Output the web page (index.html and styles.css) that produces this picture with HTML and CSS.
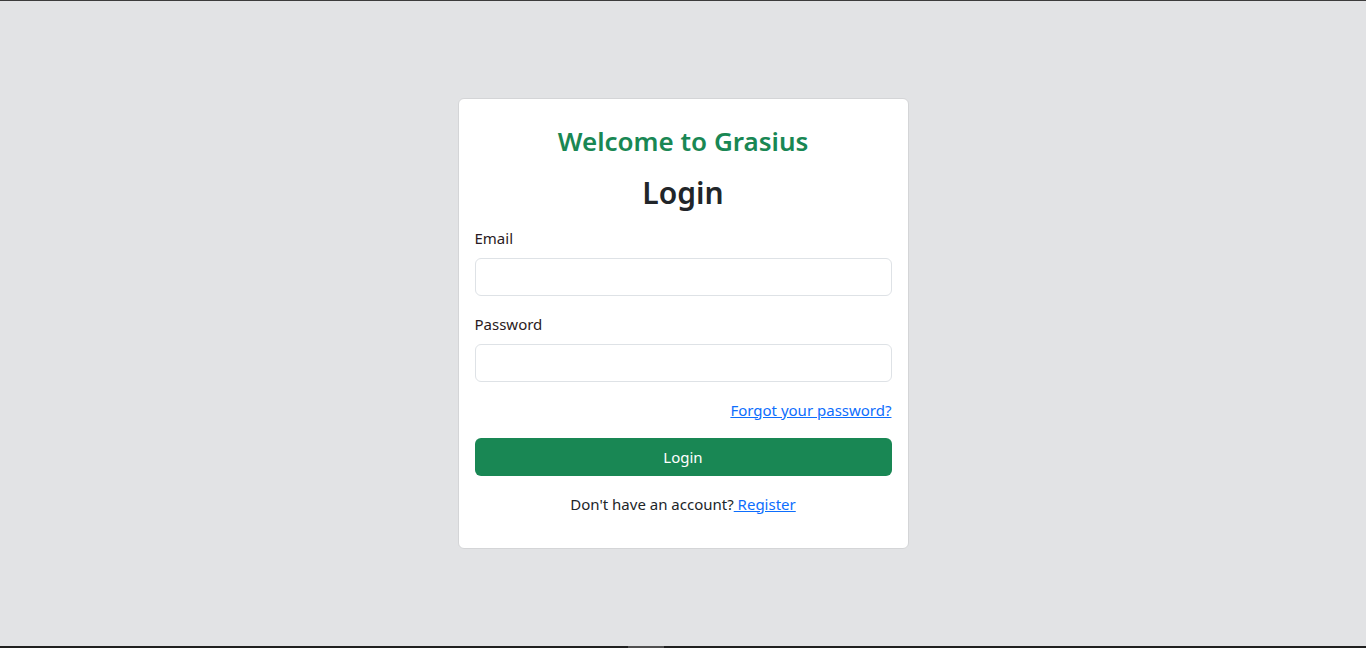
FILE: index.html
```html
<!DOCTYPE html>
<html lang="en">
<head>
<meta charset="utf-8">
<title>Login - Grasius</title>
<link rel="stylesheet" href="styles.css">
</head>
<body>
<div class="frame">
  <div class="top-edge"></div>
  <main class="page">
    <div class="card">
      <h3 class="welcome">Welcome to Grasius</h3>
      <h2 class="title">Login</h2>
      <form class="form">
        <div class="field">
          <label class="label" for="email">Email</label>
          <input class="input" id="email" type="email">
        </div>
        <div class="field">
          <label class="label" for="password">Password</label>
          <input class="input" id="password" type="password">
        </div>
        <div class="forgot-row"><a class="link" href="#">Forgot your password?</a></div>
        <button class="btn" type="button">Login</button>
        <p class="register">Don't have an account?<a class="link" href="#"> Register</a></p>
      </form>
    </div>
  </main>
  <div class="bottom-edge"><span class="thumb"></span></div>
</div>
</body>
</html>
```
FILE: styles.css
```css
* { box-sizing: border-box; }
html, body { margin: 0; padding: 0; height: 100%; }
body {
  font-family: "Noto Sans", "Open Sans", sans-serif;
  font-size: 15px;
  line-height: 24px;
  color: #212529;
  background: #e2e3e5;
}
.frame { height: 648px; display: flex; flex-direction: column; }
.top-edge { height: 1px; background: #3c3c3c; flex: none; }
.bottom-edge { height: 2px; background: #202020; flex: none; display: flex; }
.thumb { width: 36px; height: 2px; margin-left: 628px; background: #505050; }
.page { flex: 1; display: flex; align-items: center; justify-content: center; padding-bottom: 1px; }
.card {
  width: 451px;
  height: 451px;
  background: #fff;
  border: 1px solid #d4d5d7;
  border-radius: 6px;
  padding: 16px;
}
.welcome {
  margin: 10px 0 16px;
  text-align: center;
  color: #198754;
  font-size: 26px;
  font-weight: 600;
  line-height: 33.6px;
}
.title {
  margin: 0 0 13px;
  text-align: center;
  font-size: 30px;
  font-weight: 600;
  line-height: 38.4px;
  color: #212529;
}
.form { display: flex; flex-direction: column; }
.field { margin-bottom: 16px; display: flex; flex-direction: column; }
.label { margin-bottom: 8px; color: #2a1a22; }
.input {
  height: 38px;
  border: 1px solid #dee2e6;
  border-radius: 6px;
  padding: 6px 12px;
  font: inherit;
  background: #fff;
}
.forgot-row { text-align: right; margin-bottom: 16px; }
.link { color: #0d6efd; text-decoration: underline; }
.btn {
  height: 38px;
  border: none;
  border-radius: 6px;
  background: #198754;
  color: #fff;
  font: inherit;
  font-weight: 400;
  margin-bottom: 16px;
}
.register { margin: 0; text-align: center; }
```
